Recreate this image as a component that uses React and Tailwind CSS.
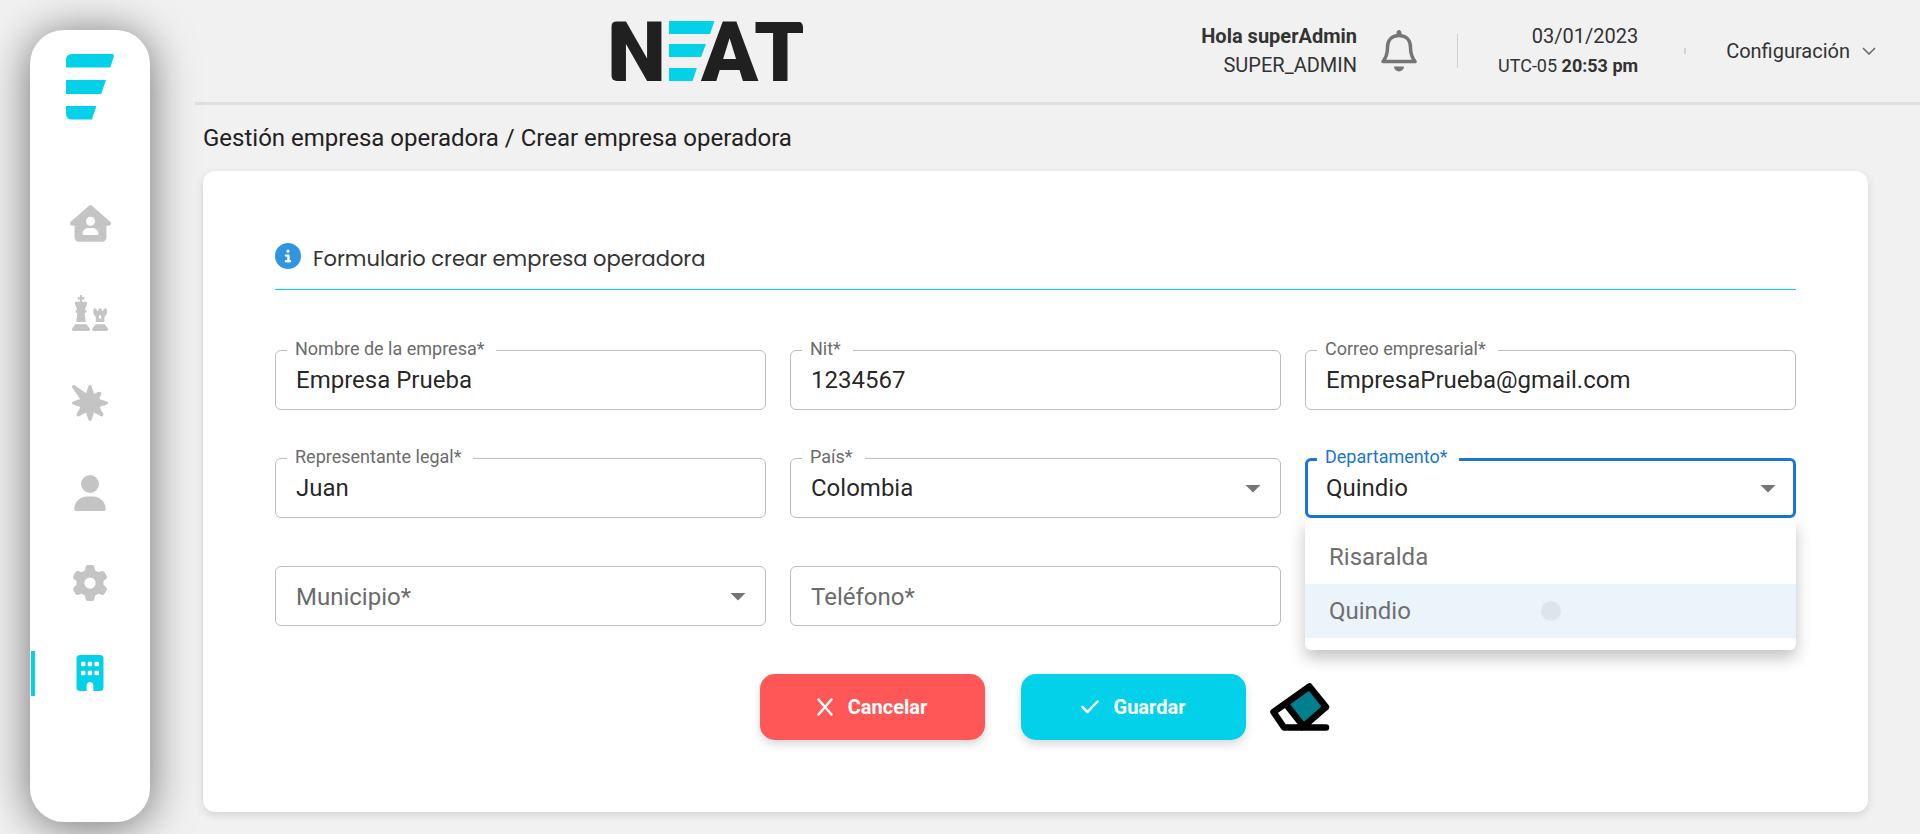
import React from "react";
import {
  FaBuilding,
  FaBurst,
  FaChess,
  FaCircleInfo,
  FaGear,
  FaHouseUser,
  FaUser,
} from "react-icons/fa6";

const NAV = [
  { label: "Inicio", Icon: FaHouseUser, size: "h-[37px] w-[41px]" },
  { label: "Juegos", Icon: FaChess, size: "h-9 w-9" },
  { label: "Eventos", Icon: FaBurst, size: "h-9 w-9" },
  { label: "Usuarios", Icon: FaUser, size: "h-9 w-9" },
  { label: "Ajustes", Icon: FaGear, size: "h-9 w-9" },
  { label: "Empresas", Icon: FaBuilding, size: "h-9 w-9", active: true },
];

function BarsMark() {
  return (
    <svg viewBox="0 0 48 66" className="h-[66px] w-12" aria-hidden="true">
      <g fill="#03d1e9">
        <path d="M6 0H46.5Q48.4 0.6 47.8 2.6L44.3 13.5H0V6Q0 0 6 0Z" />
        <path d="M0 26H40L35.2 40H0Z" />
        <path d="M0 52H30.5L25.8 65.5H6Q0 65.5 0 59.5Z" />
      </g>
    </svg>
  );
}

function Brand() {
  return (
    <svg viewBox="0 -20 194 102" className="h-[102px] w-[194px]" role="img" aria-label="NEAT">
      <defs>
        <clipPath id="brand-corners">
          <rect x="1" y="1" width="192" height="60" rx="6" />
        </clipPath>
      </defs>
      <text
        y="61"
        fill="#202020"
        fontFamily="Roboto, sans-serif"
        fontWeight="900"
        fontSize="84"
        clipPath="url(#brand-corners)"
      >
        <tspan x="-3">N</tspan>
        <tspan x="91">A</tspan>
        <tspan x="144">T</tspan>
      </text>
      <g fill="#03d1e9">
        <path d="M59 1H104.5L100 14H59Z" />
        <path d="M59 24H96L91 37H59Z" />
        <path d="M59 48H87L82.5 61H59Z" />
      </g>
    </svg>
  );
}

function BellIcon() {
  return (
    <svg viewBox="0 0 36 42" className="h-[42px] w-9" aria-hidden="true">
      <path
        d="M2 31.5C5.5 27 6.5 23 6.5 17.5C6.5 10 11 5.5 18 5.5S29.500 10 29.5 17.5C29.5 23 30.5 27 34 31.5Z"
        fill="none"
        stroke="#757575"
        strokeWidth="3.5"
        strokeLinejoin="round"
      />
      <path d="M16 5V2.5A2 2 0 0 1 20 2.5V5Z" fill="#757575" stroke="#757575" />
      <path d="M13 36.500H23A5 5 0 0 1 13 36.500Z" fill="#757575" />
    </svg>
  );
}

function EraserIcon() {
  return (
    <svg viewBox="0 0 60 48" className="h-12 w-[60px]" aria-hidden="true">
      <path d="M39.5 3.5L56 24L33 43L17 23Z" fill="#00808c" />
      <path
        d="M39.5 3.5L56 24L33.5 43.5L17 22.5M39.5 3.5L3.5 29L14 44.5H56M33.5 43.5L32 44.5"
        fill="none"
        stroke="#000"
        strokeWidth="6.5"
        strokeLinecap="round"
        strokeLinejoin="round"
      />
    </svg>
  );
}

function Field({ id, label, value, options, focused, children }) {
  const border = focused ? "border-[3px] border-[#1976d2] px-[18px]" : "border border-[#bdbdbd] px-5";
  const labelPlace = value
    ? "-top-[11px] left-3 pr-3 pl-2 text-lg leading-5"
    : "top-[15px] left-[13px] px-2 text-2xl leading-8";
  return (
    <div className="relative">
      {options ? (
        <>
          <select
            id={id}
            defaultValue={value || ""}
            className={`block h-15 w-full appearance-none rounded-md bg-white text-2xl text-black/87 outline-none ${border}`}
          >
            {!value && <option value="" />}
            {options.map((o) => (
              <option key={o}>{o}</option>
            ))}
          </select>
          <svg
            viewBox="0 0 16 8"
            className="pointer-events-none absolute top-[27px] right-5 h-2 w-4"
            aria-hidden="true"
          >
            <path d="M0.5 0H15.5L8 7.5Z" fill="#757575" />
          </svg>
        </>
      ) : (
        <input
          id={id}
          defaultValue={value}
          className={`block h-15 w-full rounded-md bg-white text-2xl text-black/87 outline-none ${border}`}
        />
      )}
      <label
        htmlFor={id}
        className={`absolute bg-white ${labelPlace} ${focused ? "text-[#1976d2]" : "text-[#6b6b6b]"}`}
      >
        {label}
      </label>
      {children}
    </div>
  );
}

export default function App() {
  return (
    <div className="flex min-h-screen bg-[#f1f1f1] font-['Roboto',sans-serif] text-[#212121]">
      <aside className="mt-[30px] mr-[45px] mb-3 ml-[30px] flex w-[120px] shrink-0 flex-col items-center rounded-[34px] bg-white pt-6 shadow-[0_4px_45px_rgba(0,0,0,0.55)]">
        <BarsMark />
        <nav className="mt-[58px] flex w-full flex-col" aria-label="Principal">
          {NAV.map(({ label, Icon, size, active }) => (
            <a
              key={label}
              href="#"
              aria-label={label}
              aria-current={active ? "page" : undefined}
              className={`relative flex h-[90px] items-center justify-center ${active ? "text-[#03d1e9]" : "text-[#c4c4c4]"}`}
            >
              {active && <span className="absolute left-px h-[45px] w-1 bg-[#03d1e9]" />}
              <Icon className={size} />
            </a>
          ))}
        </nav>
      </aside>

      <div className="flex min-w-0 flex-1 flex-col">
        <header className="flex h-[105px] items-center justify-between border-b-3 border-[#dedede] pr-11 pl-[415px]">
          <Brand />
          <div className="flex items-center text-xl leading-[29px] text-[#333]">
            <div className="text-right">
              <p className="font-bold">Hola superAdmin</p>
              <p>SUPER_ADMIN</p>
            </div>
            <button type="button" aria-label="Notificaciones" className="ml-6">
              <BellIcon />
            </button>
            <div className="ml-10 h-[34px] w-px bg-[#cfcfcf]" />
            <div className="ml-10 text-right">
              <p>03/01/2023</p>
              <p className="text-lg leading-[29px]">
                UTC-05 <b>20:53 pm</b>
              </p>
            </div>
            <div className="ml-[46px] h-1.5 w-0.5 bg-[#d3d3d3]" />
            <button type="button" className="ml-10 flex items-center gap-3">
              Configuración
              <svg viewBox="0 0 14 8" className="h-2 w-3.5" aria-hidden="true">
                <path d="M1 1L7 7L13 1" fill="none" stroke="#666" strokeWidth="1.5" />
              </svg>
            </button>
          </div>
        </header>

        <main className="flex flex-1 flex-col pr-[52px] pb-[22px] pl-2">
          <h1 className="flex h-[66px] items-center text-2xl">
            Gestión empresa operadora / Crear empresa operadora
          </h1>

          <form className="rounded-xl bg-white p-[72px] shadow-[0_3px_8px_rgba(0,0,0,0.12)]">
            <div className="flex h-[47px] gap-3 border-b border-[#03d1e9]">
              <FaCircleInfo className="h-[26px] w-[26px] text-[#2f95e0]" />
              <h2 className="font-['Poppins','Open_Sans',sans-serif] text-[21px] leading-8 text-[#333]">
                Formulario crear empresa operadora
              </h2>
            </div>

            <div className="mt-[60px] grid grid-cols-3 gap-x-6 gap-y-12">
              <Field id="nombre" label="Nombre de la empresa*" value="Empresa Prueba" />
              <Field id="nit" label="Nit*" value="1234567" />
              <Field id="correo" label="Correo empresarial*" value="EmpresaPrueba@gmail.com" />
              <Field id="representante" label="Representante legal*" value="Juan" />
              <Field id="pais" label="País*" value="Colombia" options={["Colombia"]} />
              <Field
                id="departamento"
                label="Departamento*"
                value="Quindio"
                options={["Risaralda", "Quindio"]}
                focused
              >
                <ul
                  role="listbox"
                  aria-label="Departamento"
                  className="absolute top-full right-0 left-0 z-10 rounded-md bg-white py-3 text-2xl leading-[54px] text-[#6f6f6f] shadow-[0_8px_16px_rgba(0,0,0,0.24)]"
                >
                  <li role="option" aria-selected="false" className="px-6">
                    Risaralda
                  </li>
                  <li role="option" aria-selected="true" className="relative bg-[#ebf3fb] px-6">
                    Quindio
                    <span className="absolute top-[17px] left-[48%] size-5 rounded-full bg-black/6" />
                  </li>
                </ul>
              </Field>
              <Field id="municipio" label="Municipio*" options={[]} />
              <Field id="telefono" label="Teléfono*" />
            </div>

            <div className="mt-12 flex items-center justify-center pl-[18px] text-xl font-bold text-white">
              <button
                type="button"
                className="flex h-[66px] w-[225px] items-center justify-center gap-[15px] rounded-[15px] bg-[#ff5757] shadow-[0_5px_8px_rgba(0,0,0,0.14)]"
              >
                <svg viewBox="0 0 16 18" className="h-[18px] w-4" aria-hidden="true">
                  <path d="M1.5 1.5L14.5 16.5M14.5 1.5L1.5 16.5" stroke="#fff" strokeWidth="2.5" strokeLinecap="round" />
                </svg>
                Cancelar
              </button>
              <button
                type="submit"
                className="ml-9 flex h-[66px] w-[225px] items-center justify-center gap-[15px] rounded-[15px] bg-[#03d1e9] shadow-[0_5px_8px_rgba(0,0,0,0.14)]"
              >
                <svg viewBox="0 0 18 14" className="h-3.5 w-[18px]" aria-hidden="true">
                  <path d="M1.5 7L6.5 12L16.5 1.5" fill="none" stroke="#fff" strokeWidth="2.5" strokeLinecap="round" strokeLinejoin="round" />
                </svg>
                Guardar
              </button>
              <button type="reset" aria-label="Limpiar formulario" className="ml-6">
                <EraserIcon />
              </button>
            </div>
          </form>
        </main>
      </div>
    </div>
  );
}
